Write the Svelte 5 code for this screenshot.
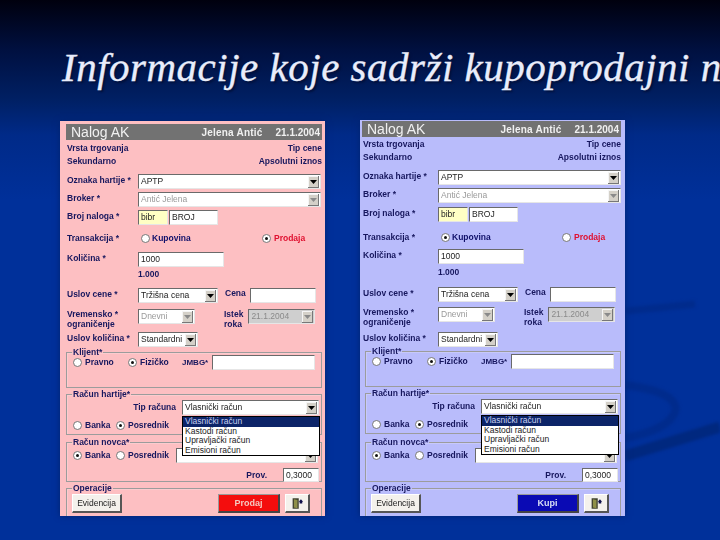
<script>
  const panels = [
    { cls: 'pink', kupovina: false, action: 'Prodaj', actionCls: 'sell' },
    { cls: 'blue', kupovina: true, action: 'Kupi', actionCls: 'buy' }
  ];
</script>

{#snippet radio(on)}
  <span class="radio" class:on></span>
{/snippet}

{#snippet select(text, cls = '')}
  <span class="select {cls}">
    <span class="val">{text}</span>
    <span class="arrow"><svg viewBox="0 0 7 4" width="7" height="4"><path d="M0 0h7L3.500 4z" /></svg></span>
  </span>
{/snippet}

<main class="slide">
  <svg class="swoosh" viewBox="0 0 720 540" width="720" height="540" aria-hidden="true">
    <path d="M625 311Q660 308 695 304" fill="none" stroke="#002b8c" stroke-width="7" />
    <path d="M625 385Q680 392 675 412Q668 430 625 438" fill="none" stroke="#002b8c" stroke-width="8" />
    <path d="M625 456 720 427" fill="none" stroke="#00287f" stroke-width="11" />
  </svg>
  <h1>Informacije koje sadrži kupoprodajni n</h1>
  <div class="panels">
    {#each panels as p}
      <section class="panel {p.cls}">
        <header class="bar">
          <span class="bar-title">Nalog AK</span>
          <span class="bar-user">Jelena Antić</span>
          <span class="bar-date">21.1.2004</span>
        </header>

        <div class="row between"><span>Vrsta trgovanja</span><span>Tip cene</span></div>
        <div class="row between"><span>Sekundarno</span><b>Apsolutni iznos</b></div>

        <div class="row"><label>Oznaka hartije *</label>{@render select('APTP', 'grow')}</div>
        <div class="row"><label>Broker *</label>{@render select('Antić Jelena', 'grow off')}</div>
        <div class="row">
          <label>Broj naloga *</label>
          <span class="input yellow w30">bibr</span>
          <span class="input w49">BROJ</span>
        </div>
        <div class="row trans">
          <label>Transakcija *</label>
          <span class="opt first">{@render radio(p.kupovina)}<b class="kup">Kupovina</b></span>
          <span class="opt second">{@render radio(!p.kupovina)}<b class="pro">Prodaja</b></span>
        </div>
        <div class="row"><label>Količina *</label><span class="input w86">1000</span></div>
        <div class="row"><label></label><b>1.000</b></div>
        <div class="row">
          <label>Uslov cene *</label>
          {@render select('Tržišna cena', 'w80')}
          <label class="inner">Cena</label>
          <span class="input w66"></span>
        </div>
        <div class="row">
          <label class="two">Vremensko *<br />ograničenje</label>
          {@render select('Dnevni', 'w57 off')}
          <label class="inner two roka">Istek<br />roka</label>
          {@render select('21.1.2004', 'w67 off gray')}
        </div>
        <div class="row"><label>Uslov količina *</label>{@render select('Standardni', 'w60')}</div>

        <fieldset class="box b-client">
          <legend>Klijent*</legend>
          <div class="box-row">
            <span class="opt w55">{@render radio(false)}Pravno</span>
            <span class="opt w54">{@render radio(true)}Fizičko</span>
            <span class="jmbg">JMBG*</span>
            <span class="input w103"></span>
          </div>
        </fieldset>

        <fieldset class="box b-paper">
          <legend>Račun hartije*</legend>
          <div class="tip">
            <span>Tip računa</span>
            {@render select('Vlasnički račun', 'w137')}
            <ul class="drop">
              <li class="sel">Vlasnički račun</li>
              <li>Kastodi račun</li>
              <li>Upravljački račun</li>
              <li>Emisioni račun</li>
            </ul>
          </div>
          <div class="box-row low">
            <span class="opt w43">{@render radio(false)}Banka</span>
            <span class="opt">{@render radio(true)}Posrednik</span>
          </div>
        </fieldset>

        <fieldset class="box b-money">
          <legend>Račun novca*</legend>
          <div class="box-row top">
            <span class="opt w43">{@render radio(true)}Banka</span>
            <span class="opt w60">{@render radio(false)}Posrednik</span>
            {@render select('', 'w142')}
          </div>
          <div class="prov"><span>Prov.</span><span class="input w36">0,3000</span></div>
        </fieldset>

        <fieldset class="box b-ops">
          <legend>Operacije</legend>
          <div class="ops">
            <span class="btn evid">Evidencija</span>
            <span class="btn action {p.actionCls}">{p.action}</span>
            <span class="btn door" aria-label="Izlaz">
              <svg viewBox="0 0 16 14" width="14" height="13">
                <path d="M3 1h7v12H3z" fill="#3f4030" />
                <path d="M4.500 2 8.500 3v9.500l-4-1z" fill="#8f9048" />
                <path d="M11 7V5h-1l2.500-3L15 5h-1v2z" fill="#10104a" />
              </svg>
            </span>
          </div>
        </fieldset>
      </section>
    {/each}
  </div>
</main>

<style>
  :global(body) {
    margin: 0;
    background: #00309a;
  }
  .slide {
    position: relative;
    width: 720px;
    height: 540px;
    overflow: hidden;
    box-sizing: border-box;
    background: linear-gradient(180deg, #00000e 0, #001040 50px, #002064 100px, #002a88 135px, #00309a 200px, #00309a 100%);
  }
  .swoosh {
    position: absolute;
    left: 0;
    top: 0;
    filter: blur(1.500px);
  }
  h1 {
    position: relative;
    margin: 0;
    padding: 45px 0 0 62px;
    height: 120px;
    box-sizing: border-box;
    font: italic 400 41px/44px "Liberation Serif", serif;
    letter-spacing: 0.5px;
    color: #e9edfb;
    white-space: nowrap;
    -webkit-text-stroke: 0.35px #e9edfb;
    text-shadow: 2px 2px 2px #00103a;
  }
  .panels {
    position: relative;
    display: flex;
    gap: 35px;
    padding-left: 60px;
    align-items: flex-start;
  }
  .panel {
    width: 265px;
    height: 396px;
    box-sizing: border-box;
    overflow: hidden;
    display: grid;
    align-items: start;
    font: 400 8.500px/11px "Liberation Sans", sans-serif;
    color: #17175e;
    filter: blur(0.4px);
    box-shadow: 0 0 6px #00236f;
  }
  .pink {
    background: #fdbfc2;
    padding: 3px 3px 0 6px;
    margin-top: 1px;
    height: 395px;
    --lab: 72px;
    --boxl: 0px;
    grid-template-rows: 18px 13px 19px 18px 18px 21px 21px 17px 19px 21px 23px 20px 42px 48px 46px 1fr;
  }
  .blue {
    background: #b9bcfb;
    padding: 1px 4px 0 2px;
    --lab: 76px;
    --boxl: 3px;
    grid-template-rows: 17px 13px 19px 18px 19px 23px 19px 18px 20px 20px 25px 19px 42px 49px 46px 1fr;
  }
  .bar {
    display: flex;
    align-items: center;
    height: 16px;
    background: #727272;
    color: #f0f0f0;
    padding: 0 2px 0 5px;
    font-weight: 700;
  }
  .bar-title {
    font-size: 14px;
    font-weight: 400;
    margin-right: auto;
  }
  .bar-user { font-size: 10px; letter-spacing: 0.2px; margin-right: 13px; }
  .bar-date { font-size: 10px; }
  .row {
    display: flex;
    align-items: flex-start;
    font-weight: 700;
  }
  .between {
    justify-content: space-between;
    padding: 1px 0 0 1px;
    height: 12px;
  }
  .between :global(span) { font-weight: 700; }
  label {
    flex: none;
    width: var(--lab);
    padding: 1px 0 0 1px;
    box-sizing: border-box;
    font-weight: 700;
    white-space: nowrap;
  }
  label.inner { width: auto; margin: 0 4px 0 6px; padding-top: 0; }
  label.two { line-height: 10px; padding-top: 0; }
  label.roka { margin-left: 28px; margin-right: 5px; }
  .trans label { padding-top: 2px; }
  .input,
  .select {
    display: inline-flex;
    align-items: center;
    height: 15px;
    box-sizing: border-box;
    background: #fff;
    border-top: 1px solid #6a6a6a;
    border-left: 1px solid #6a6a6a;
    border-right: 1px solid #e6e6e6;
    border-bottom: 1px solid #e6e6e6;
    color: #222;
    font-weight: 400;
    padding-left: 2px;
    white-space: nowrap;
  }
  .select { position: relative; }
  .val { flex: 1; overflow: hidden; }
  .arrow {
    flex: none;
    width: 11px;
    height: 12px;
    margin-right: 1px;
    display: flex;
    align-items: center;
    justify-content: center;
    background: #d4d0c8;
    box-shadow: inset -1px -1px #777, inset 1px 1px #f5f5f5;
  }
  .arrow svg { fill: #000; }
  .grow { width: 183px; }
  .off { color: #9a9a9a; }
  .off .arrow svg { fill: #8a8a8a; }
  .gray { background: #cfcfcf; color: #8a8a8a; }
  .yellow { background: #ffffc4; }
  .w30 { width: 30px; }
  .w49 { width: 49px; margin-left: 1px; }
  .w86 { width: 86px; }
  .w66 { width: 66px; }
  .w80 { width: 80px; }
  .w57 { width: 57px; }
  .w67 { width: 67px; }
  .w60 { width: 60px; }
  .w103 { width: 103px; }
  .w137 { width: 137px; }
  .w142 { width: 142px; }
  .w36 { width: 36px; height: 14px; }
  .opt {
    display: inline-flex;
    align-items: center;
    gap: 3px;
    font-weight: 700;
    color: #17175e;
  }
  .box .opt { gap: 3px; }
  .first { margin: 2px 0 0 3px; width: 121px; gap: 2px; }
  .second { margin-top: 2px; gap: 3px; }
  .kup { color: #10106a; }
  .pro { color: #e01030; }
  .w55 { flex: none; width: 55px; }
  .w54 { flex: none; width: 54px; }
  .w43 { flex: none; width: 43px; }
  .box .w60 { flex: none; width: 60px; }
  .radio {
    flex: none;
    width: 7px;
    height: 7px;
    border-radius: 50%;
    background: #fff;
    border: 1px solid #777;
    box-sizing: content-box;
    display: inline-flex;
    align-items: center;
    justify-content: center;
  }
  .radio.on::after {
    content: '';
    width: 3px;
    height: 3px;
    border-radius: 50%;
    background: #111;
  }
  .box {
    margin: -4px 0 0 var(--boxl);
    padding: 0;
    border: 1px solid #9c9c9c;
    box-shadow: inset 1px 1px #fff3;
    min-width: 0;
    position: relative;
    box-sizing: border-box;
    font-weight: 700;
  }
  .b-client { height: 40px; }
  .b-paper { height: 45px; }
  .b-money { height: 44px; }
  .b-ops { height: 60px; }
  legend {
    margin-left: 5px;
    padding: 0 1px;
    font-weight: 700;
    line-height: 8px;
  }
  .box-row {
    display: flex;
    align-items: center;
    padding: 0 0 0 6px;
    margin-top: -1px;
    height: 15px;
  }
  .box-row.low { margin-top: 3px; }
  .box-row.top { margin-top: 2px; }
  .jmbg { width: 30px; flex: none; font-size: 8px; margin-right: 0; }
  .tip {
    display: flex;
    align-items: center;
    justify-content: flex-end;
    gap: 6px;
    padding-right: 2px;
    margin-top: 2px;
    position: relative;
    z-index: 2;
  }
  .drop {
    position: absolute;
    top: 16px;
    right: 1px;
    width: 138px;
    margin: 0;
    padding: 0;
    list-style: none;
    background: #fff;
    border: 1px solid #000;
    box-sizing: border-box;
    height: 40px;
    color: #222;
    font-weight: 400;
    z-index: 3;
  }
  .drop li { height: 9.500px; line-height: 9.500px; padding-left: 2px; font-size: 8.500px; }
  .drop .sel { background: #0c2468; color: #c8d0f0; }
  .prov {
    display: flex;
    justify-content: flex-end;
    align-items: center;
    gap: 16px;
    padding-right: 2px;
    margin-top: 5px;
  }
  .ops {
    display: flex;
    align-items: center;
    padding: 0 0 0 5px;
    margin-top: 2px;
  }
  .btn {
    display: inline-flex;
    align-items: center;
    justify-content: center;
    height: 19px;
    box-sizing: border-box;
    background: #f4f1ec;
    border-top: 1px solid #fff;
    border-left: 1px solid #fff;
    border-right: 2px solid #555;
    border-bottom: 2px solid #555;
    color: #222;
    font-weight: 400;
  }
  .evid { width: 50px; }
  .action {
    width: 62px;
    margin-left: 96px;
    font-weight: 700;
    font-size: 9px;
    border-color: #999 #444 #444 #999;
  }
  .sell { background: #f40d0d; color: #f4c8c0; }
  .buy { background: #0a0ab4; color: #d8def4; }
  .door { width: 25px; margin-left: 5px; }
</style>
